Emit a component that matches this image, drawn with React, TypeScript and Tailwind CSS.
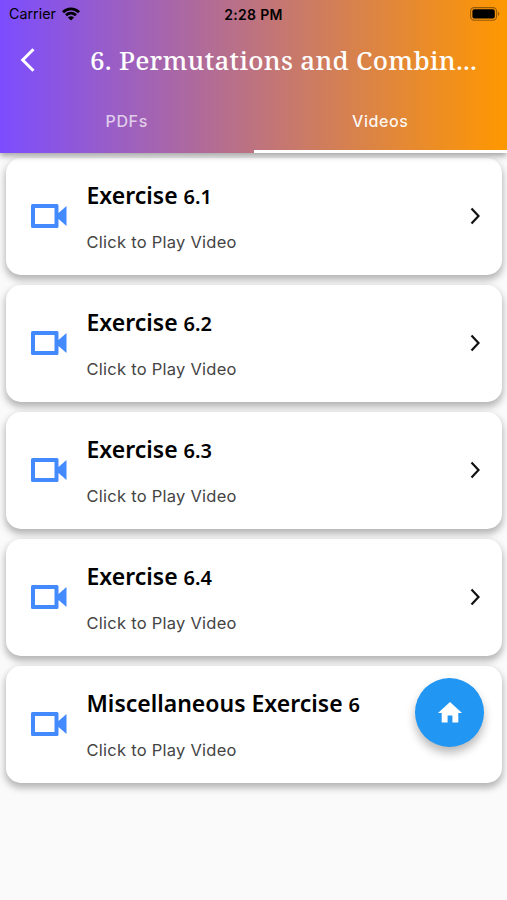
import React from 'react';

interface Exercise {
  name: string;
  number: string;
}

const exercises: Exercise[] = [
  { name: 'Exercise', number: '6.1' },
  { name: 'Exercise', number: '6.2' },
  { name: 'Exercise', number: '6.3' },
  { name: 'Exercise', number: '6.4' },
  { name: 'Miscellaneous Exercise', number: '6' },
];

const StatusBar: React.FC = () => (
  <div className="grid h-7 grid-cols-3 items-center pl-[9px] pr-[7px] text-black">
    <div className="flex items-center gap-[6px]">
      <span className="text-[14.3px]">Carrier</span>
      <svg width="18" height="14" viewBox="0 0 18 14" fill="none" stroke="currentColor" strokeWidth="2.7">
        <path d="M1 5.2C5.5 0.7 12.5 0.7 17 5.2" />
        <path d="M4 8.3C7 5.5 11 5.5 14 8.3" />
        <path d="M9 13.5L5.9 10.4C7.7 8.8 10.3 8.8 12.1 10.4Z" fill="currentColor" stroke="none" />
      </svg>
    </div>
    <span className="-ml-[2px] whitespace-nowrap text-center text-[14px] font-semibold tracking-[0.3px]">2:28 PM</span>
    <svg className="justify-self-end" width="30" height="14" viewBox="0 0 30 14">
      <rect x="0.6" y="0.6" width="26" height="12.6" rx="3.6" fill="none" stroke="#000" strokeOpacity="0.4" strokeWidth="1.1" />
      <rect x="2.4" y="2.3" width="22.4" height="9.2" rx="2" fill="#000" />
      <path d="M28 4.8C29.8 5.5 29.8 8.3 28 9Z" fill="#000" fillOpacity="0.4" />
    </svg>
  </div>
);

const Header: React.FC = () => (
  <header className="relative z-10 flex h-[152.5px] flex-col bg-[linear-gradient(to_right,#7c4dff,#ff9800)] shadow-[0_3px_6px_rgba(0,0,0,0.35)]">
    <StatusBar />
    <div className="flex h-16 items-center pl-5 text-white">
      <svg className="shrink-0" width="16" height="26" viewBox="0 0 16 26" fill="none" stroke="currentColor" strokeWidth="3">
        <path d="M13.5 2.2L2.7 13L13.5 23.8" />
      </svg>
      <h1 className="ml-[54px] whitespace-nowrap font-['Noto_Serif','Liberation_Serif',serif] text-[26px] font-medium tracking-[0.27px]">
        6. Permutations and Combin...
      </h1>
    </div>
    <div className="grid flex-1 grid-cols-2 text-center text-[16px] font-medium tracking-[0.6px]">
      <button className="pb-[3px] text-white/70">PDFs</button>
      <button className="border-b-[3px] border-white text-white/95">Videos</button>
    </div>
  </header>
);

const VideoCard: React.FC<{ exercise: Exercise; showArrow: boolean }> = ({ exercise, showArrow }) => (
  <li className="flex h-[117px] items-center rounded-[15px] bg-white pl-[25px] pr-[21px] shadow-[0_4px_7px_1px_rgba(0,0,0,0.28)]">
    <svg width="36" height="24" viewBox="0 0 36 24" fill="#448aff">
      <path fillRule="evenodd" d="M1.5 0H26Q27.5 0 27.5 1.5V9L35.5 2V22L27.5 15V22.5Q27.5 24 26 24H1.5Q0 24 0 22.5V1.5Q0 0 1.5 0ZM4 4V20H23.5V4Z" />
    </svg>
    <div className="ml-[19.5px] flex flex-1 flex-col">
      <h2 className="font-['Noto_Sans',sans-serif] text-[23px] font-semibold leading-8 text-black">
        {exercise.name} <span className="text-[20px]">{exercise.number}</span>
      </h2>
      <p className="mt-[17px] text-[16.5px] leading-6 tracking-[0.25px] text-[#444]">Click to Play Video</p>
    </div>
    {showArrow && (
      <svg width="12" height="18" viewBox="0 0 12 18" fill="none" stroke="#111" strokeWidth="2.2">
        <path d="M2.5 1.5L9.5 9L2.5 16.5" />
      </svg>
    )}
  </li>
);

const App: React.FC = () => (
  <div className="relative h-[900px] w-[507px] overflow-hidden bg-[#fafafa] font-['Inter',sans-serif]">
    <Header />
    <ul className="flex flex-col gap-[10px] pl-[6px] pr-[5px] pt-[5px]">
      {exercises.map((exercise, index) => (
        <VideoCard
          key={index}
          exercise={exercise}
          showArrow={index < exercises.length - 1}
        />
      ))}
    </ul>

    {/* Floating home button */}
    <button
      aria-label="Home"
      className="absolute left-[415px] top-[677.5px] flex h-[69px] w-[69px] items-center justify-center rounded-full bg-[#2196f3] shadow-[0_6px_10px_rgba(0,0,0,0.28)]"
    >
      <svg width="24" height="21" viewBox="0 0 24 21" fill="#fff">
        <path d="M9.6 20.5V13.4H14.4V20.5H20.3V11H24L12 0L0 11H3.7V20.5Z" />
      </svg>
    </button>
  </div>
);

export default App;
